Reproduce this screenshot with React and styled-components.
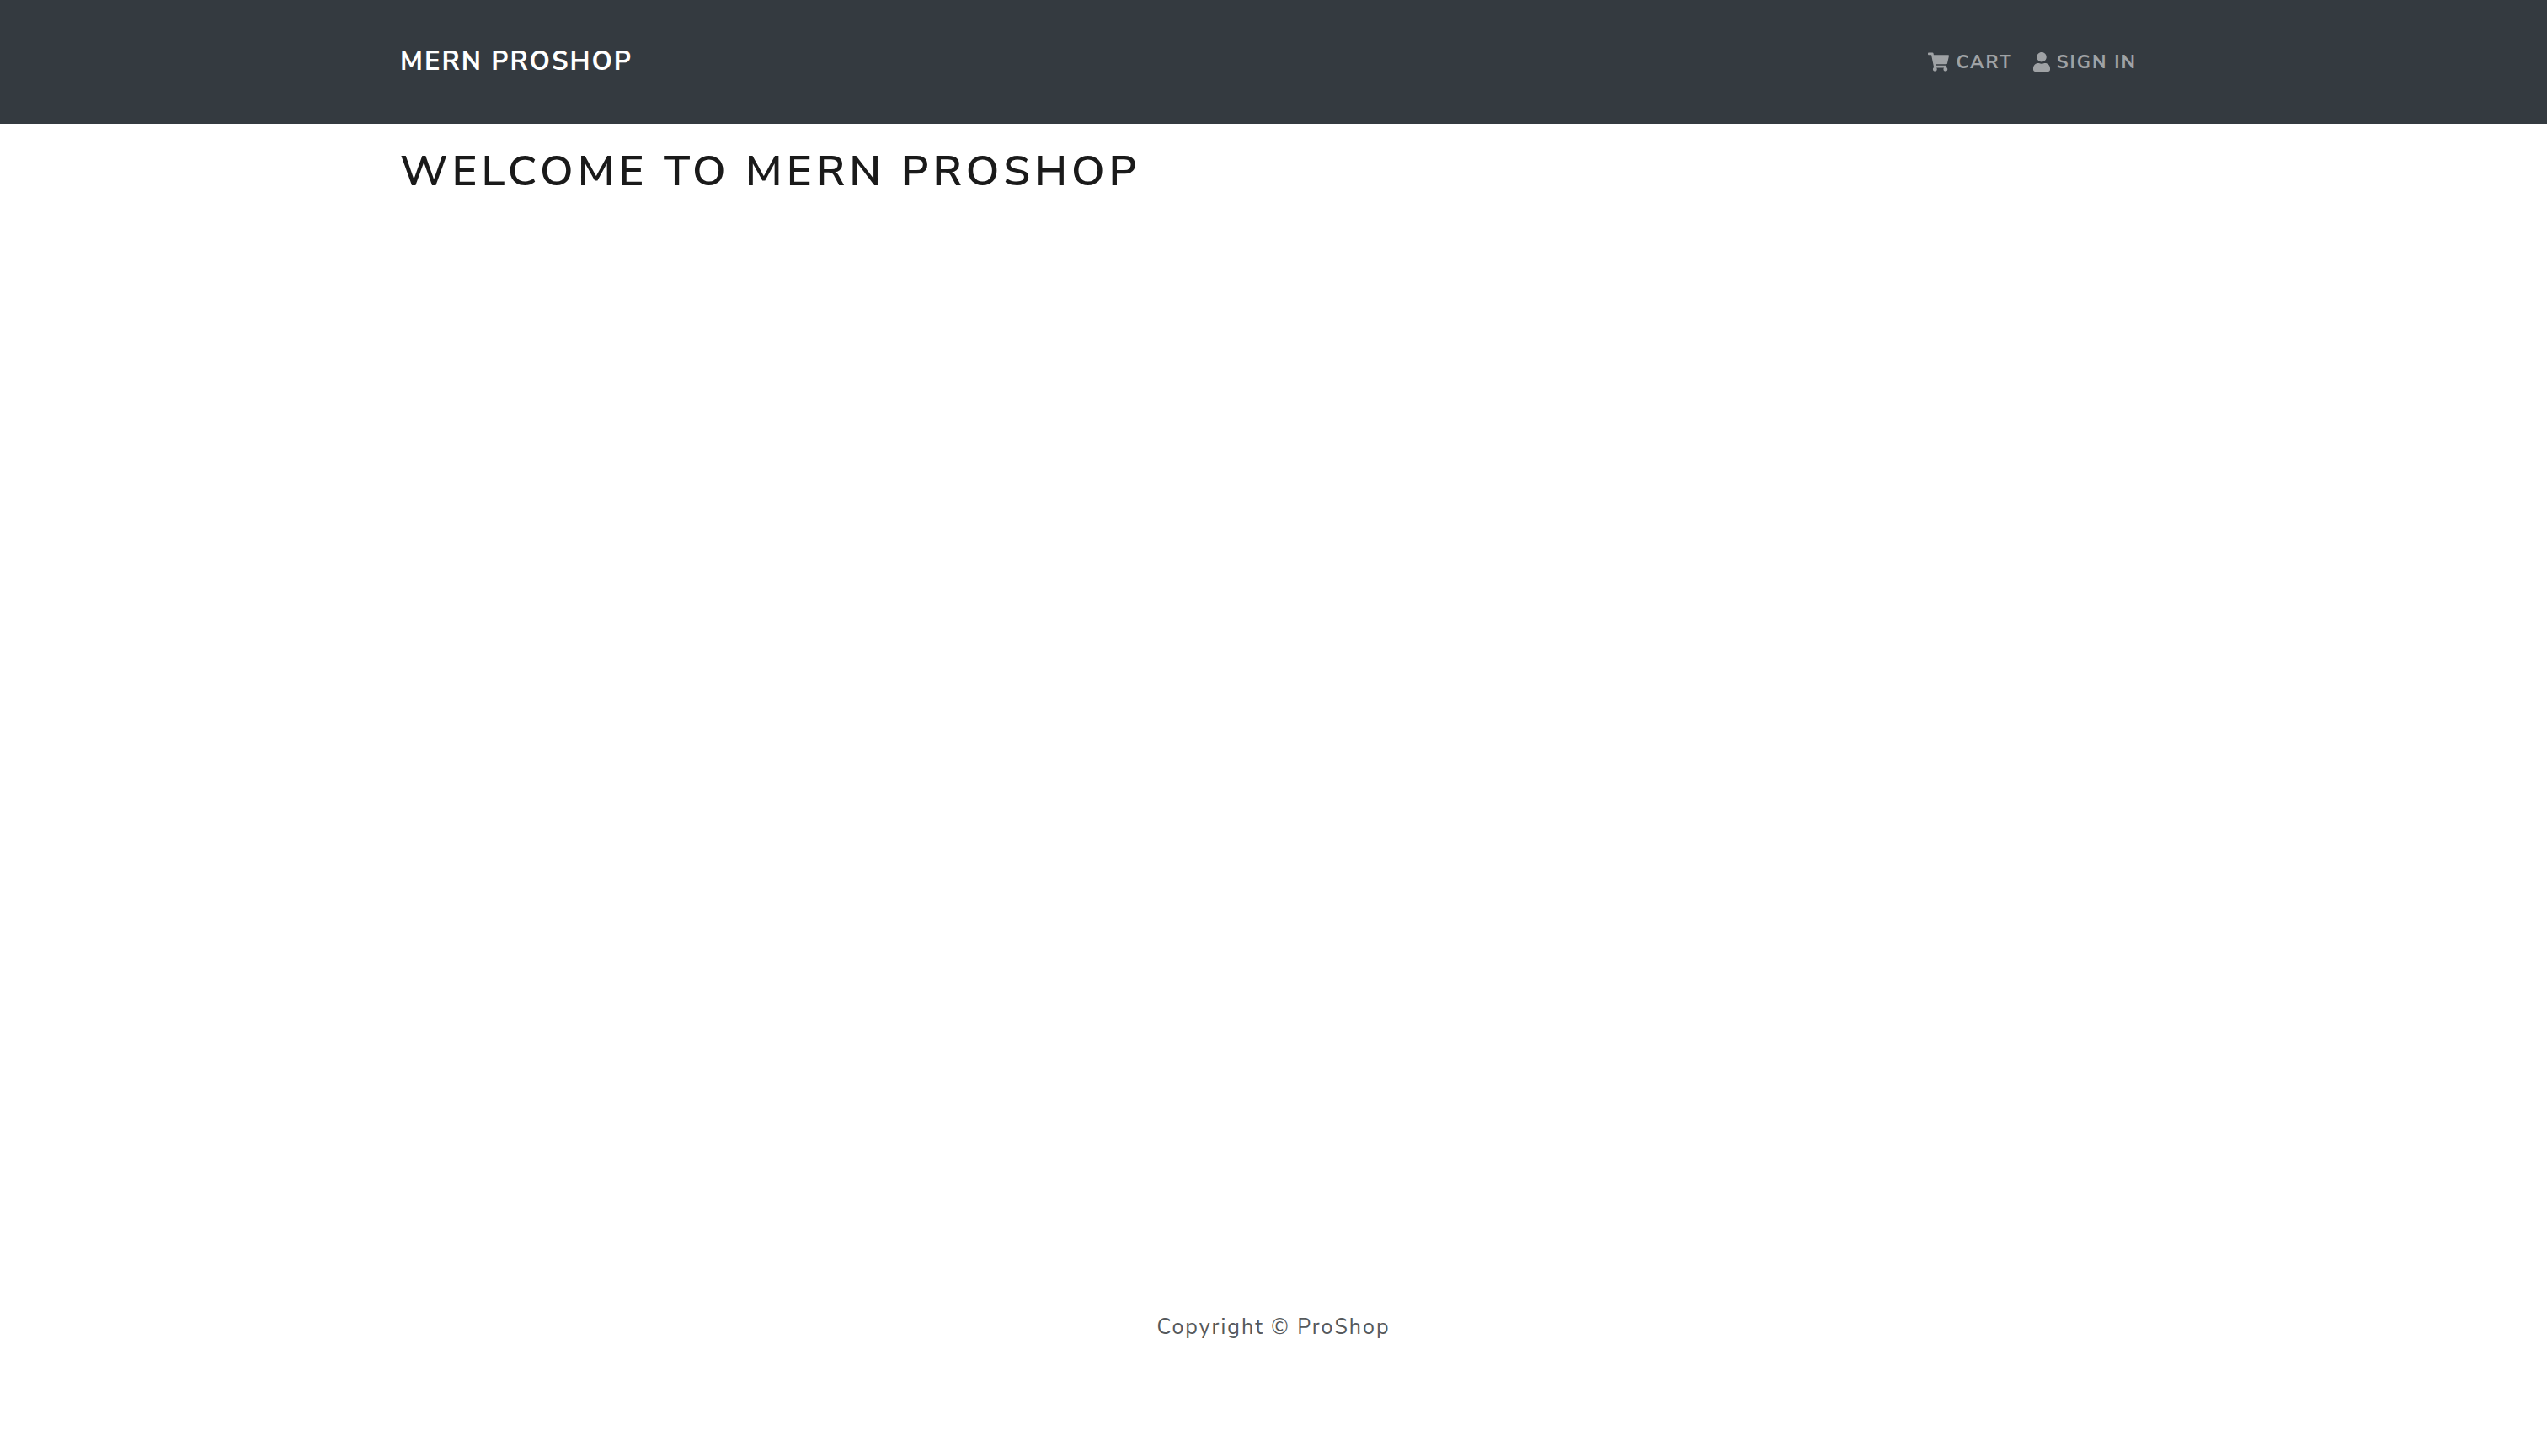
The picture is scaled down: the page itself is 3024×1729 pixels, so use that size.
import React from 'react';
import styled, { createGlobalStyle } from 'styled-components';
import { FaShoppingCart, FaUser } from 'react-icons/fa';

const GlobalStyle = createGlobalStyle`
  *, *::before, *::after { box-sizing: border-box; }
  body {
    margin: 0;
    background: #fff;
    color: #55595c;
    font-family: "Nunito Sans", "Open Sans", sans-serif;
    font-size: 25px;
    line-height: 40px;
    letter-spacing: 2px;
  }
`;

const Container = styled.div`
  width: 100%;
  max-width: 2110px;
  margin: 0 auto;
  padding: 0 18px;
`;

const Header = styled.header`
  background: #343a40;
`;

const NavBar = styled(Container).attrs({ as: 'nav' })`
  display: flex;
  align-items: center;
  justify-content: space-between;
  min-height: 147px;
`;

const Brand = styled.a`
  padding-bottom: 2px;
  color: #fff;
  font-size: 31px;
  font-weight: 700;
  line-height: 48px;
  text-decoration: none;
  text-transform: uppercase;
`;

const NavList = styled.ul`
  display: flex;
  margin: 0;
  padding: 0;
  list-style: none;
`;

const NavLink = styled.a`
  display: flex;
  align-items: center;
  gap: 8px;
  padding: 12px;
  color: #9fa2a5;
  font-size: 22px;
  font-weight: 700;
  line-height: 36px;
  text-decoration: none;
  text-transform: uppercase;

  svg {
    width: ${({ $iconWidth }) => $iconWidth}px;
    height: 23px;
  }
`;

const Main = styled.main`
  min-height: 80vh;
  padding: 26px 0;
`;

const Title = styled.h1`
  margin: 0;
  color: #1a1a1a;
  font-size: 51px;
  font-weight: 600;
  line-height: 60px;
  letter-spacing: 5px;
  text-transform: uppercase;
`;

const Footer = styled.footer`
  padding: 26px 0;
  text-align: center;
`;

const links = [
  { label: 'Cart', href: '/cart', Icon: FaShoppingCart, iconWidth: 25 },
  { label: 'Sign In', href: '/login', Icon: FaUser, iconWidth: 20 },
];

export default function App() {
  return (
    <>
      <GlobalStyle />
      <Header>
        <NavBar>
          <Brand href="/">MERN ProShop</Brand>
          <NavList>
            {links.map(({ label, href, Icon, iconWidth }) => (
              <li key={href}>
                <NavLink href={href} $iconWidth={iconWidth}>
                  <Icon aria-hidden="true" />
                  {label}
                </NavLink>
              </li>
            ))}
          </NavList>
        </NavBar>
      </Header>
      <Main>
        <Container>
          <Title>Welcome to MERN ProShop</Title>
        </Container>
      </Main>
      <Footer>Copyright © ProShop</Footer>
    </>
  );
}
